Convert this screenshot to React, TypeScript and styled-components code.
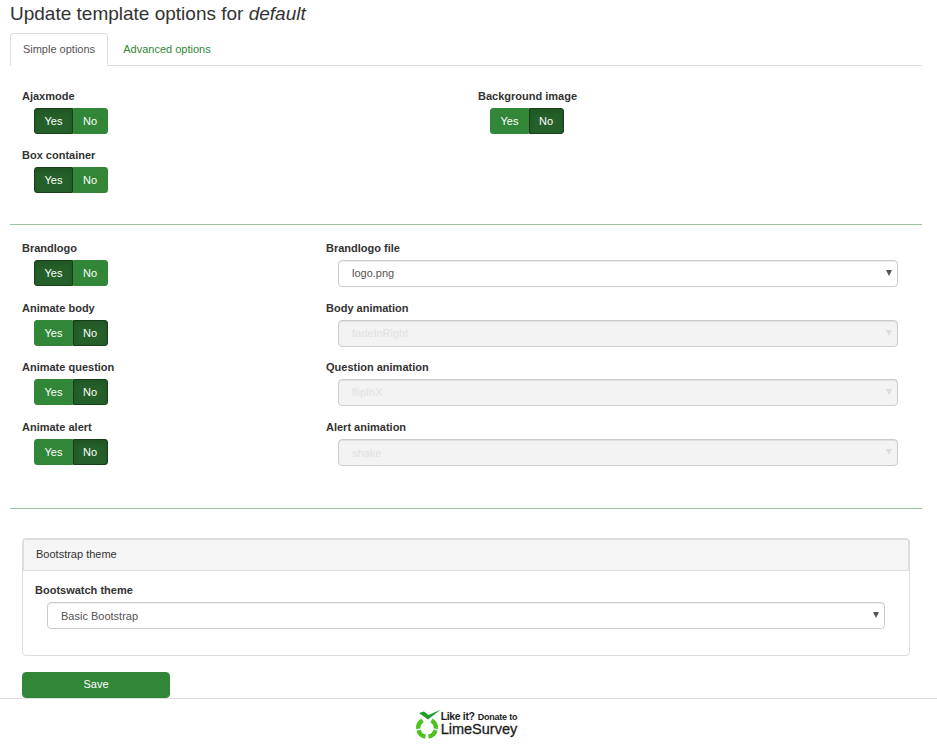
import * as React from "react";
import styled, { createGlobalStyle } from "styled-components";

const GlobalStyle = createGlobalStyle`
  html, body {
    margin: 0;
    padding: 0;
    background: #fff;
    color: #333;
    font-family: "Liberation Sans", Arial, sans-serif;
    font-size: 11px;
    line-height: 17px;
  }
`;

const Page = styled.div`
  height: 749px;
  overflow: hidden;
  display: flex;
  flex-direction: column;
`;

const Main = styled.div`
  width: 912px;
  margin-left: 10px;
  height: 698px;
  flex-shrink: 0;
`;

const Title = styled.h3`
  margin: 0;
  height: 33px;
  font-size: 19px;
  font-weight: 400;
  line-height: 28px;
  em {
    font-style: italic;
  }
`;

const Tabs = styled.ul`
  display: flex;
  list-style: none;
  margin: 0;
  padding: 0;
  height: 32px;
  border-bottom: 1px solid #ddd;
`;

const Tab = styled.li<{ $active?: boolean }>`
  width: ${(p) => (p.$active ? "98px" : "118px")};
  box-sizing: border-box;
  height: 33px;
  padding-top: 7px;
  text-align: center;
  border: 1px solid ${(p) => (p.$active ? "#ddd" : "transparent")};
  border-bottom: ${(p) => (p.$active ? "1px solid #fff" : "none")};
  border-radius: 4px 4px 0 0;
  color: ${(p) => (p.$active ? "#555" : "#328637")};
`;

const Divider = styled.hr`
  border: 0;
  border-top: 1px solid #9cc29f;
  margin: 0;
`;

const HalfGrid = styled.div`
  display: grid;
  grid-template-columns: 456px 456px;
  grid-auto-rows: 59px;
  padding-top: 22px;
  height: 158px;
  box-sizing: border-box;
`;

const BrandGrid = styled.div`
  display: grid;
  grid-template-columns: 304px 608px;
  grid-template-rows: 60px 59px 60px 59px;
  padding-top: 15px;
  height: 283px;
  box-sizing: border-box;
  align-content: start;
`;

const Group = styled.div`
  padding: 0 12px;
`;

const Label = styled.label`
  display: block;
  font-weight: 700;
  height: 17px;
  margin-bottom: 3px;
`;

const Toggle = styled.div`
  display: inline-flex;
  margin-left: 12px;
  width: 74px;
  height: 26px;
`;

const ToggleOption = styled.span<{ $on?: boolean; $side: "left" | "right" }>`
  box-sizing: border-box;
  flex: 0 0 ${(p) => (p.$side === "left" ? "39px" : "35px")};
  display: flex;
  align-items: center;
  justify-content: center;
  padding-right: ${(p) => (p.$side === "right" ? "1px" : "0")};
  color: #fff;
  border: 1px solid ${(p) => (p.$on ? "#173f1a" : "#328637")};
  background: ${(p) => (p.$on ? "#255f29" : "#328637")};
  box-shadow: ${(p) => (p.$on ? "inset 0 3px 5px rgba(0, 0, 0, 0.125)" : "none")};
  border-radius: ${(p) => (p.$side === "left" ? "3px 0 0 3px" : "0 3px 3px 0")};
`;

const SelectWrap = styled.div<{ $wide?: boolean; $disabled?: boolean }>`
  position: relative;
  width: ${(p) => (p.$wide ? "838px" : "560px")};
  margin-left: 12px;
  &::after {
    content: "";
    position: absolute;
    top: 10px;
    right: 6px;
    border-style: solid;
    border-width: 6px 3px 0;
    border-color: ${(p) => (p.$disabled ? "#dcdcdc" : "#555")} transparent transparent;
  }
`;

const Select = styled.select<{ $low?: boolean }>`
  display: block;
  box-sizing: border-box;
  appearance: none;
  width: 100%;
  height: 27px;
  padding: ${(p) => (p.$low ? "2px 13px 0" : "0 13px")};
  font: inherit;
  color: #555;
  background-color: #fff;
  border: 1px solid #ccc;
  border-radius: 4px;
  box-shadow: inset 0 1px 1px rgba(0, 0, 0, 0.075);
  opacity: 1;
  &:disabled {
    background-color: #f3f3f3;
    color: #e2e2e2;
    opacity: 1;
  }
`;

const Panel = styled.section`
  margin: 29px 12px 0;
  height: 118px;
  box-sizing: border-box;
  border: 1px solid #ddd;
  border-radius: 4px;
`;

const PanelHeading = styled.div`
  height: 32px;
  box-sizing: border-box;
  padding: 6px 12px;
  background: #f5f5f5;
  border: 1px solid #ddd;
`;

const PanelBody = styled.div`
  padding: 11px 12px;
`;

const SaveButton = styled.button`
  display: block;
  width: 148px;
  height: 26px;
  margin: 16px 0 0 12px;
  padding: 0 0 2px;
  font: inherit;
  color: #fff;
  background: #328637;
  border: 1px solid #328637;
  border-radius: 4px;
`;

const Footer = styled.footer`
  flex: 1;
  border-top: 1px solid #ddd;
  display: flex;
  justify-content: center;
  padding: 10px 5px 0 0;
`;

const Logo = styled.div`
  display: flex;
  align-items: flex-start;
  height: 32px;
  color: #1c1c1c;
`;

const LogoText = styled.div`
  margin-left: -1px;
  padding-top: 2px;
`;

const LogoSmall = styled.div`
  display: flex;
  align-items: baseline;
  gap: 3px;
  line-height: 10px;
  font-weight: 700;
  white-space: nowrap;
`;

const LogoLike = styled.span`
  font-size: 10.5px;
  letter-spacing: -0.35px;
`;

const LogoDonate = styled.span`
  font-size: 9px;
  letter-spacing: -0.2px;
`;

const LogoBig = styled.div`
  font-size: 14.5px;
  line-height: 14px;
  margin-top: 0;
  -webkit-text-stroke: 0.3px #1c1c1c;
`;

const LogoMark = () => (
  <svg width="27" height="31" viewBox="0 0 27 31">
    <g fill="none" stroke="#4cc21f" strokeWidth="4.4">
      <path d="M7.6 11.4 A8.8 8.8 0 0 0 3.23 19.77" />
      <path d="M3.5 21.28 A8.8 8.8 0 0 0 10.47 27.67" />
      <path d="M13.53 27.67 A8.8 8.8 0 0 0 20.5 21.28" />
      <path d="M20.77 19.77 A8.8 8.8 0 0 0 16.4 11.4" />
    </g>
    <path d="M4 4 L9 2.5 L13.5 6 L25.5 0.8 L13 10.5 Z" fill="#1f9d2f" />
  </svg>
);

const SimpleToggle = ({ on }: { on: "yes" | "no" }) => (
  <Toggle>
    <ToggleOption $side="left" $on={on === "yes"}>Yes</ToggleOption>
    <ToggleOption $side="right" $on={on === "no"}>No</ToggleOption>
  </Toggle>
);

const rows = [
  { label: "Brandlogo", on: "yes", selectLabel: "Brandlogo file", value: "logo.png", disabled: false, low: false },
  { label: "Animate body", on: "no", selectLabel: "Body animation", value: "fadeInRight", disabled: true, low: false },
  { label: "Animate question", on: "no", selectLabel: "Question animation", value: "flipInX", disabled: true, low: false },
  { label: "Animate alert", on: "no", selectLabel: "Alert animation", value: "shake", disabled: true, low: true },
] as const;

export default function App() {
  return (
    <Page>
      <GlobalStyle />
      <Main>
        <Title>
          Update template options for <em>default</em>
        </Title>
        <Tabs>
          <Tab $active>Simple options</Tab>
          <Tab>Advanced options</Tab>
        </Tabs>
        <HalfGrid>
          <Group>
            <Label>Ajaxmode</Label>
            <SimpleToggle on="yes" />
          </Group>
          <Group>
            <Label>Background image</Label>
            <SimpleToggle on="no" />
          </Group>
          <Group>
            <Label>Box container</Label>
            <SimpleToggle on="yes" />
          </Group>
        </HalfGrid>
        <Divider />
        <BrandGrid>
          {rows.map((r) => (
            <React.Fragment key={r.label}>
              <Group>
                <Label>{r.label}</Label>
                <SimpleToggle on={r.on} />
              </Group>
              <Group>
                <Label>{r.selectLabel}</Label>
                <SelectWrap $disabled={r.disabled}>
                  <Select $low={r.low} disabled={r.disabled} defaultValue={r.value}>
                    <option>{r.value}</option>
                  </Select>
                </SelectWrap>
              </Group>
            </React.Fragment>
          ))}
        </BrandGrid>
        <Divider />
        <Panel>
          <PanelHeading>Bootstrap theme</PanelHeading>
          <PanelBody>
            <Label>Bootswatch theme</Label>
            <SelectWrap $wide>
              <Select $low defaultValue="Basic Bootstrap">
                <option>Basic Bootstrap</option>
              </Select>
            </SelectWrap>
          </PanelBody>
        </Panel>
        <SaveButton>Save</SaveButton>
      </Main>
      <Footer>
        <Logo>
          <LogoMark />
          <LogoText>
            <LogoSmall>
              <LogoLike>Like it?</LogoLike>
              <LogoDonate>Donate to</LogoDonate>
            </LogoSmall>
            <LogoBig>LimeSurvey</LogoBig>
          </LogoText>
        </Logo>
      </Footer>
    </Page>
  );
}
